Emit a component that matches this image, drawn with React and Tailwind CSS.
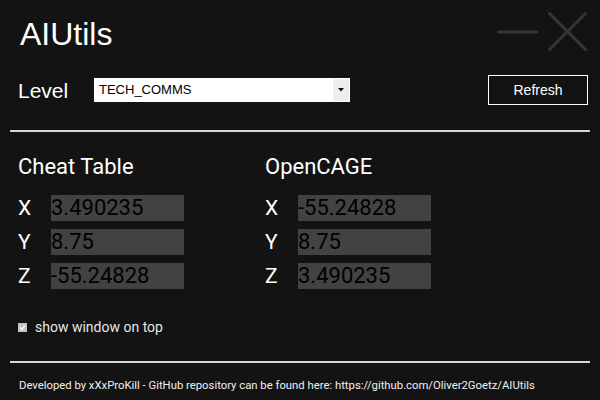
import React from 'react';

// AIUtils main window - dark tool panel with two coordinate blocks
const arial = { fontFamily: '"Liberation Sans", Arial, sans-serif' };

const sections = [
  { title: 'Cheat Table', values: { X: '3.490235', Y: '8.75', Z: '-55.24828' } },
  { title: 'OpenCAGE', values: { X: '-55.24828', Y: '8.75', Z: '3.490235' } },
];

function WindowControls() {
  return (
    <svg width="92" height="42" viewBox="0 0 92 42" className="mt-[11px]">
      <g stroke="#363636" strokeWidth="3" strokeLinecap="round" fill="none">
        <line x1="2.5" y1="21" x2="40.5" y2="21" />
        <line x1="53.5" y1="2.5" x2="89.5" y2="38.5" />
        <line x1="89.5" y1="2.5" x2="53.5" y2="38.5" />
      </g>
    </svg>
  );
}

function CoordBlock({ title, values }) {
  return (
    <div>
      <div className="text-[22px] leading-none text-white">{title}</div>
      <div className="mt-[17px] flex flex-col gap-[8px]">
        {Object.entries(values).map(([axis, val]) => (
          <div key={axis} className="flex items-center h-[26px]">
            <div className="w-[33px] text-[21px] leading-none text-white">{axis}</div>
            <div className="w-[133px] h-[26px] bg-[#424242] text-black text-[22px] leading-[26px] overflow-hidden whitespace-nowrap">
              {val}
            </div>
          </div>
        ))}
      </div>
    </div>
  );
}

export default function App() {
  return (
    <div
      className="w-[600px] h-[400px] bg-[#131313] text-white flex flex-col overflow-hidden"
      style={{ fontFamily: 'Roboto, "Liberation Sans", sans-serif' }}
    >
      {/* Header */}
      <div className="h-[75px] flex justify-between items-start pl-[20px] pr-[12px]">
        <div className="mt-[18px] text-[32px] leading-none" style={arial}>AIUtils</div>
        <WindowControls />
      </div>

      {/* Level selector + refresh */}
      <div className="h-[30px] flex items-center pl-[18px] pr-[12px]" style={arial}>
        <div className="w-[76px] text-[21px] leading-none">Level</div>
        <div className="w-[256px] h-[24px] bg-white border border-white flex items-stretch">
          <div className="flex-1 pl-[4px] text-[13px] leading-[22px] text-black">TECH_COMMS</div>
          <div className="w-[16px] bg-[#eeeeee] flex items-center justify-center">
            <svg width="6" height="4" viewBox="0 0 6 4">
              <polygon points="0,0 6,0 3,3.5" fill="#111" />
            </svg>
          </div>
        </div>
        <div className="flex-1" />
        <div className="w-[100px] h-[30px] border border-white flex items-center justify-center text-[14px]">
          Refresh
        </div>
      </div>

      <div className="mt-[25px] mx-[10px] h-[2px] bg-[#d6d6d6]" />

      {/* Coordinates */}
      <div className="mt-[24px] pl-[18px] grid grid-cols-[247px_1fr]">
        {sections.map((s) => (
          <CoordBlock key={s.title} title={s.title} values={s.values} />
        ))}
      </div>

      {/* Checkbox */}
      <div className="mt-[30px] h-[16px] pl-[18px] flex items-center">
        <div className="w-[9px] h-[9px] bg-[#c4c4c4] flex items-center justify-center">
          <svg width="7" height="7" viewBox="0 0 7 7">
            <path d="M1 3.6 L2.8 5.4 L6 1.4" stroke="#fff" strokeWidth="1.4" fill="none" />
          </svg>
        </div>
        <span className="ml-[8px] text-[14px] leading-[16px] text-[#e6e6e6]">show window on top</span>
      </div>

      <div className="mt-[26px] mx-[10px] h-[2px] bg-[#d6d6d6]" />

      {/* Footer */}
      <div className="mt-[16px] pl-[19px] text-[11.3px] leading-[13px] text-[#f0f0f0] whitespace-nowrap">
        Developed by xXxProKill - GitHub repository can be found here: https://github.com/Oliver2Goetz/AIUtils
      </div>
    </div>
  );
}
